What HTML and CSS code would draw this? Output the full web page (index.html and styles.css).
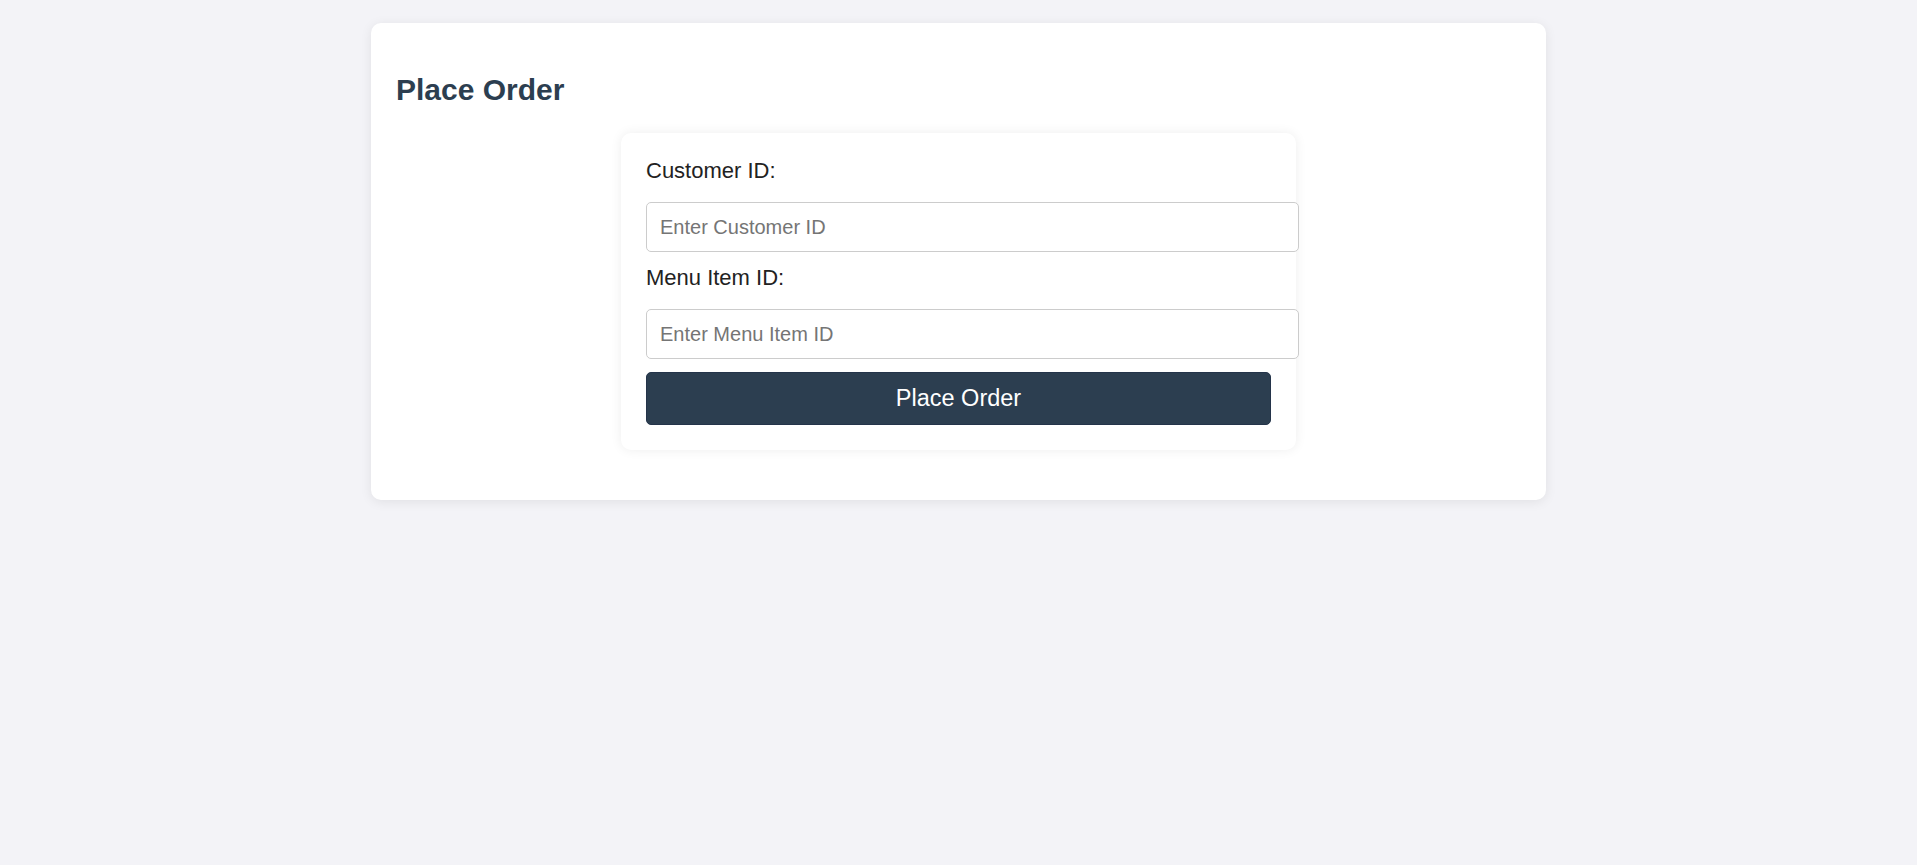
FILE: index.html
```html
<!DOCTYPE html>
<html lang="en">
<head>
<meta charset="utf-8">
<title>Place Order</title>
<link rel="stylesheet" href="styles.css">
</head>
<body>
<main class="container">
  <h2 class="title">Place Order</h2>
  <form class="order-form">
    <label class="field-label" for="customerId">Customer ID:</label>
    <input class="field-input" id="customerId" type="text" placeholder="Enter Customer ID">
    <label class="field-label" for="menuItemId">Menu Item ID:</label>
    <input class="field-input" id="menuItemId" type="text" placeholder="Enter Menu Item ID">
    <button class="submit-btn" type="button">Place Order</button>
  </form>
</main>
</body>
</html>
```

FILE: styles.css
```css
html, body {
  margin: 0;
  padding: 0;
}
body {
  background: #f3f3f7;
  font-family: "Liberation Sans", Arial, sans-serif;
  color: #333;
  padding-top: 23px;
  min-height: 100vh;
  box-sizing: border-box;
}
.container {
  width: 1175px;
  margin: 0 auto;
  background: #ffffff;
  border-radius: 10px;
  padding: 25px;
  box-sizing: border-box;
  box-shadow: 0 2px 12px rgba(0, 0, 0, 0.08);
}
.title {
  font-size: 30px;
  font-weight: bold;
  color: #2c3e50;
  margin: 25px 0 25px 0;
  line-height: 34.5px;
}
.order-form {
  width: 675px;
  margin: 0 auto 25px auto;
  padding: 25px;
  box-sizing: border-box;
  background: #ffffff;
  border-radius: 10px;
  box-shadow: 0 0 12px rgba(0, 0, 0, 0.07);
  display: block;
}
.field-label {
  display: block;
  font-size: 22px;
  line-height: 25px;
  color: #222;
  margin-bottom: 19.5px;
}
.field-input {
  display: block;
  box-sizing: content-box;
  width: 100%;
  padding: 12px 13px;
  border: 1px solid #cccccc;
  border-radius: 5px;
  font-family: "Liberation Sans", Arial, sans-serif;
  font-size: 20px;
  line-height: 24px;
  height: 24px;
  margin: 0 0 12.5px 0;
  color: #333;
  background: #fff;
  outline: none;
}
.field-input::placeholder {
  color: #757575;
}
.submit-btn {
  display: block;
  width: 100%;
  height: 53px;
  box-sizing: border-box;
  background: #2c3e50;
  color: #ffffff;
  border: 1px solid #24344a;
  border-radius: 5px;
  font-family: "Liberation Sans", Arial, sans-serif;
  font-size: 23.5px;
  cursor: pointer;
  padding: 0;
}
```
